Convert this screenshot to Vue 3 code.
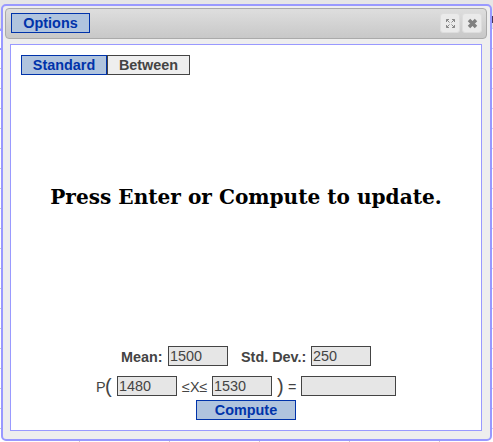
<script setup>
import { ref } from 'vue'
const mean = ref('1500')
const sd = ref('250')
const low = ref('1480')
const high = ref('1530')
const result = ref('')
</script>

<template>
  <main class="page">
    <section class="dialog">
      <header class="titlebar">
        <button class="btn options">Options</button>
        <div class="tools">
          <button class="tool" aria-label="Expand">
            <svg width="11" height="11" viewBox="0 0 11 11"><path d="M4 1.5H1.5V4M7 1.5H9.5V4M4 9.5H1.5V7M7 9.5H9.5V7M1.5 1.5L4.5 4.5M9.5 1.5L6.5 4.5M1.5 9.5L4.5 6.5M9.5 9.5L6.5 6.5" fill="none" stroke="#888" stroke-width="1" /></svg>
          </button>
          <button class="tool" aria-label="Close">
            <svg width="11" height="11" viewBox="0 0 11 11"><path d="M2 2L9 9M9 2L2 9" fill="none" stroke="#808080" stroke-width="3.5" /></svg>
          </button>
        </div>
      </header>
      <div class="panel">
        <nav class="tabs">
          <button class="btn standard">Standard</button>
          <button class="btn between">Between</button>
        </nav>
        <div class="message">Press Enter or Compute to update.</div>
        <div class="row params">
          <label class="mean">Mean:</label><input v-model="mean" />
          <label class="sd">Std. Dev.:</label><input v-model="sd" />
        </div>
        <div class="row prob">
          <span class="p">P</span><span class="open">(</span><input v-model="low" />
          <span class="rel">≤X≤</span><input v-model="high" />
          <span class="close">)</span><span class="eq">=</span><input v-model="result" class="result" />
        </div>
        <button class="btn compute">Compute</button>
      </div>
    </section>
  </main>
</template>

<style>
body { margin: 0; overflow: hidden; }
</style>

<style scoped>
* { box-sizing: border-box; }
.page {
  width: 493px; height: 442px; padding: 4px 1px 1px;
  background:
    linear-gradient(#435, #435) 492px 16px / 1px 7px no-repeat,
    linear-gradient(#99f, #99f) 0 29px / 1px 2px no-repeat,
    linear-gradient(#99f, #99f) 0 48px / 1px 2px no-repeat,
    linear-gradient(#e6e6e6, #e6e6e6) 0 0 / 100% 28px no-repeat,
    repeating-linear-gradient(90deg, #fff 0 79px, #ccc 79px 80px, #fff 80px 90px) 0 441px / 100% 1px no-repeat,
    repeating-linear-gradient(#fff 0 8px, #ccc 8px 9px, #fff 9px 20px) 0 0 / 1px 100% no-repeat,
    repeating-linear-gradient(#fff 0 8px, #ccf 8px 9px, #fff 9px 20px) 492px 0 / 1px 100% no-repeat,
    #fff;
  font: 14.4px "Liberation Sans", Arial, sans-serif; color: #444;
}
.dialog {
  width: 491px; height: 437px; padding: 2px 3px 0 2px;
  border: 2px solid #99f; border-radius: 5px; background: #eee;
}
.titlebar {
  width: 482px; height: 31px; padding: 4px 5px 0; display: flex; justify-content: space-between;
  border: 1px solid #aaa; border-radius: 4px; background: linear-gradient(#dedede, #c8c8c8);
}
.btn {
  height: 20px; padding: 0; border: 1px solid #0033aa; background: #b0c4de; color: #0033aa;
  font: bold 14.4px/18px "Liberation Sans", Arial, sans-serif; text-align: center;
}
.options { width: 79px; }
.tools { display: flex; gap: 2px; margin-right: -1px; }
.tool {
  width: 20px; height: 20px; padding: 0; border: 1px solid #ddd; border-radius: 3px;
  background: #eaeaea; display: flex; align-items: center; justify-content: center;
}
.panel {
  width: 472px; height: 387px; margin: 5px 0 0 5px; padding-top: 10px;
  border: 1px solid #99f; background: #fff; display: flex; flex-direction: column;
}
.tabs { display: flex; height: 20px; padding-left: 10px; }
.standard { width: 86px; }
.between { width: 83px; background: #eee; border-color: #444; color: #444; }
.message {
  height: 271px; padding-top: 110px; text-align: center; color: #000;
  font: bold 20.1px/24px "DejaVu Serif", serif; white-space: nowrap;
}
.row { display: flex; height: 20px; flex: none; line-height: 22px; white-space: nowrap; }
.params { padding-left: 110px; font-weight: bold; margin-bottom: 10px; }
.mean { width: 47px; }
.sd { width: 70px; margin-left: 13px; }
input {
  width: 60px; height: 20px; padding: 0 1px; border: 1px solid #444; border-radius: 0;
  background: #e6e6e6; color: #444; font: 14.4px/18px "Liberation Sans", Arial, sans-serif;
}
.prob { padding-left: 85px; }
.p { width: 9px; }
.open { width: 12px; font-size: 20px; line-height: 20px; }
.rel { width: 35px; padding-left: 5px; }
.close { width: 16px; padding-left: 5px; font-size: 20px; line-height: 20px; }
.eq { width: 13px; }
.result { width: 95px; }
.compute { width: 100px; margin: 4px 0 0 185px; }
</style>
